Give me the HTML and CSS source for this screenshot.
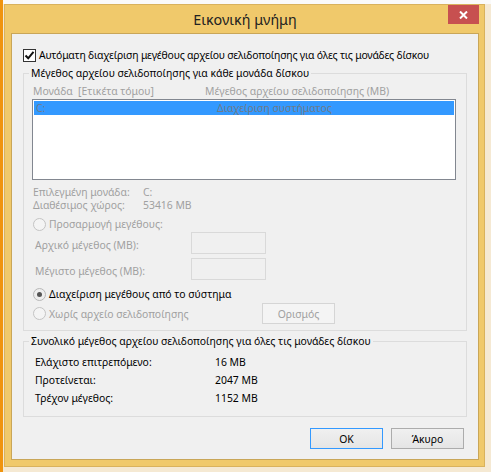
FILE: index.html
```html
<!DOCTYPE html>
<html lang="el">
<head>
<meta charset="utf-8">
<title>Εικονική μνήμη</title>
<link rel="stylesheet" href="styles.css">
</head>
<body>
<div class="desk">
  <div class="window">
    <div class="titlebar">
      <span></span>
      <div class="title">Εικονική μνήμη</div>
      <div class="close-wrap">
        <div class="close">
          <svg width="9" height="8" viewBox="0 0 9 8"><path d="M1 0.5 L8 7.5 M8 0.5 L1 7.5" stroke="#fff" stroke-width="2" fill="none"/></svg>
        </div>
      </div>
    </div>
    <div class="client">
      <div class="check-row">
        <span class="checkbox"><svg width="11" height="11" viewBox="0 0 11 11"><path d="M1.5 5.5 L4.2 8.3 L9.5 1.8" stroke="#111" stroke-width="2" fill="none"/></svg></span>
        <span class="check-label">Αυτόματη διαχείριση μεγέθους αρχείου σελιδοποίησης για όλες τις μονάδες δίσκου</span>
      </div>

      <fieldset class="group group-drives">
        <legend>Μέγεθος αρχείου σελιδοποίησης για κάθε μονάδα δίσκου</legend>
        <div class="list-head dim">
          <span class="head-drive">Μονάδα&nbsp; [Ετικέτα τόμου]</span>
          <span>Μέγεθος αρχείου σελιδοποίησης (MB)</span>
        </div>
        <div class="listbox">
          <div class="list-row selected">
            <span class="row-drive">C:</span>
            <span>Διαχείριση συστήματος</span>
          </div>
        </div>
        <div class="info dim">
          <span>Επιλεγμένη μονάδα:</span><span>C:</span>
          <span>Διαθέσιμος χώρος:</span><span>53416 MB</span>
        </div>
        <div class="radio-row first">
          <span class="radio"></span>
          <span>Προσαρμογή μεγέθους:</span>
        </div>
        <div class="field-row">
          <span class="field-label dim">Αρχικό μέγεθος (MB):</span>
          <span class="textbox"></span>
        </div>
        <div class="field-row second">
          <span class="field-label dim">Μέγιστο μέγεθος (MB):</span>
          <span class="textbox"></span>
        </div>
        <div class="radio-row sys">
          <span class="radio checked"></span>
          <span>Διαχείριση μεγέθους από το σύστημα</span>
        </div>
        <div class="radio-row last">
          <div class="radio-label">
            <span class="radio"></span>
            <span>Χωρίς αρχείο σελιδοποίησης</span>
          </div>
          <button class="btn btn-disabled" disabled>Ορισμός</button>
        </div>
      </fieldset>

      <fieldset class="group group-total">
        <legend>Συνολικό μέγεθος αρχείου σελιδοποίησης για όλες τις μονάδες δίσκου</legend>
        <div class="totals">
          <span>Ελάχιστο επιτρεπόμενο:</span><span>16 MB</span>
          <span>Προτείνεται:</span><span>2047 MB</span>
          <span>Τρέχον μέγεθος:</span><span>1152 MB</span>
        </div>
      </fieldset>

      <div class="actions">
        <button class="btn btn-default">OK</button>
        <button class="btn">Άκυρο</button>
      </div>
    </div>
  </div>
</div>
</body>
</html>
```

FILE: styles.css
```css
* { box-sizing: border-box; }

html, body {
  margin: 0;
  padding: 0;
  width: 491px;
  height: 472px;
  overflow: hidden;
}

body {
  font-family: "Noto Sans", "DejaVu Sans", sans-serif;
  font-size: 10.4px;
  color: #000;
  background: #f5e9d3;
}

.desk {
  width: 491px;
  height: 472px;
  padding: 4px 6px 5px 4px;
  background:
    linear-gradient(to right, #f0940e 0 3px, transparent 3px),
    linear-gradient(#fafafa 0 4px, transparent 4px),
    #f5e9d3;
}

.window {
  width: 481px;
  height: 463px;
  background: #f0c96b;
  border: 1px solid #d9b25d;
  padding: 0 5px 6px 6px;
  display: flex;
  flex-direction: column;
}

.titlebar {
  height: 28px;
  display: grid;
  grid-template-columns: 1fr auto 1fr;
  align-items: start;
}

.title {
  font-size: 14.3px;
  line-height: 20px;
  margin-top: 5px;
  color: #222;
}

.close-wrap {
  display: flex;
  justify-content: flex-end;
}

.close {
  width: 31px;
  height: 19px;
  background: #c75050;
  display: flex;
  align-items: center;
  justify-content: center;
}

.client {
  flex: 1;
  background: #f0f0f0;
  border: 1px solid #c9a658;
  padding: 13px 11px 0 11px;
  display: flex;
  flex-direction: column;
}

.dim { color: #a0a0a0; }

.check-row {
  display: flex;
  align-items: center;
  height: 16px;
  gap: 3px;
  white-space: nowrap;
}

.check-label { letter-spacing: -0.19px; }

.checkbox {
  width: 13px;
  height: 13px;
  border: 1px solid #333;
  background: #fff;
  display: flex;
  align-items: center;
  justify-content: center;
  flex: none;
}

.group {
  margin: 2px 0 0 0;
  border: 1px solid #dcdcdc;
  padding: 2px 10px 6px 8px;
  min-width: 0;
}

.group legend {
  padding: 0 2px;
  margin-left: -3px;
  line-height: 16px;
  white-space: nowrap;
}

.list-head {
  display: flex;
  height: 16px;
  line-height: 16px;
  padding-left: 1px;
  white-space: nowrap;
}

.head-drive { width: 172px; }

.listbox {
  height: 81px;
  border: 1px solid #828790;
  background: #fff;
  padding: 1px;
}

.list-row {
  display: flex;
  height: 14px;
  line-height: 14px;
  padding-left: 2px;
  white-space: nowrap;
}

.list-row.selected { background: #3399ff; color: #6f7b8a; }

.row-drive { width: 181px; }

.info {
  display: grid;
  grid-template-columns: 110px auto;
  line-height: 13px;
  margin-top: 6px;
  padding-left: 1px;
  white-space: nowrap;
}

.radio-row {
  display: flex;
  align-items: center;
  gap: 3px;
  height: 16px;
  padding-left: 1px;
  color: #a0a0a0;
  white-space: nowrap;
}

.radio-row.first { margin-top: 4px; }
.radio-row.sys { margin-top: 6px; color: #000; }

.radio {
  width: 13px;
  height: 13px;
  border-radius: 50%;
  border: 1px solid #c4c4c4;
  background: #f4f4f4;
  display: flex;
  align-items: center;
  justify-content: center;
  flex: none;
}

.radio.checked { border-color: #b8b8b8; background: #eeeeee; }

.radio.checked::after {
  content: "";
  width: 5px;
  height: 5px;
  border-radius: 50%;
  background: #555;
}

.radio-row.last {
  margin-top: 1px;
  height: 21px;
  display: grid;
  grid-template-columns: 226px 73px;
}

.radio-label {
  display: flex;
  align-items: center;
  gap: 3px;
}

.field-row {
  display: flex;
  height: 22px;
  align-items: center;
  white-space: nowrap;
}

.field-row.second { margin-top: 4px; }

.field-label {
  width: 159px;
  padding-left: 3px;
  padding-top: 3px;
}

.textbox {
  width: 75px;
  height: 22px;
  border: 1px solid #d9d9d9;
  background: #f0f0f0;
}

.btn {
  font: inherit;
  width: 73px;
  height: 21px;
  padding: 0;
  border: 1px solid #acacac;
  background: linear-gradient(#f0f0f0, #e5e5e5);
  color: #000;
}

.btn-disabled {
  border-color: #d5d5d5;
  background: #f4f4f4;
  color: #a0a0a0;
}

.btn-default { border-color: #3399ff; }

.group-total {
  padding: 4px 10px 9px 8px;
}

.totals {
  display: grid;
  grid-template-columns: 180px auto;
  line-height: 18px;
  padding-left: 3px;
  white-space: nowrap;
}

.actions {
  display: flex;
  justify-content: flex-end;
  gap: 8px;
  margin-top: 11px;
  padding-right: 3px;
}
```
